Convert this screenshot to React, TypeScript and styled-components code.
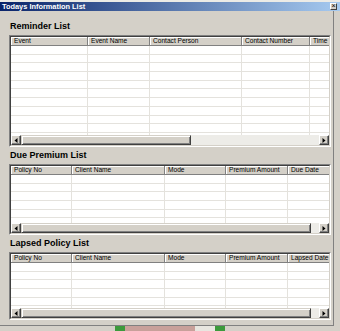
import React from 'react';
import styled, { createGlobalStyle } from 'styled-components';

type Column = {
    label: string
    width?: number
}

type ListPropsType = {
    columns: Column[]
    rowsHeight: number
    thumbWidth: number
}

const GlobalStyle = createGlobalStyle`
    html, body {
        margin: 0;
        padding: 0;
        background: #d4d0c8;
    }
    body {
        width: 340px;
        height: 331px;
        overflow: hidden;
        font-family: "Liberation Sans", Arial, sans-serif;
    }
`

// last column has no width: it takes what is left and gets clipped
const reminderColumns: Column[] = [
    { label: 'Event', width: 77 },
    { label: 'Event Name', width: 62 },
    { label: 'Contact Person', width: 92 },
    { label: 'Contact Number', width: 68 },
    { label: 'Time' },
]

const dueColumns: Column[] = [
    { label: 'Policy No', width: 61 },
    { label: 'Client Name', width: 93 },
    { label: 'Mode', width: 61 },
    { label: 'Premium Amount', width: 62 },
    { label: 'Due Date' },
]

const lapsedColumns: Column[] = [
    { label: 'Policy No', width: 61 },
    { label: 'Client Name', width: 93 },
    { label: 'Mode', width: 61 },
    { label: 'Premium Amount', width: 62 },
    { label: 'Lapsed Date' },
]

const Arrow = ({ dir }: { dir: 'left' | 'right' }) => (
    <svg width="4" height="5" viewBox="0 0 4 5">
        {dir === 'left'
            ? <polygon points="3.5,0 3.5,5 0.5,2.5" fill="#000" />
            : <polygon points="0.5,0 0.5,5 3.5,2.5" fill="#000" />}
    </svg>
)

const ListView = (props: ListPropsType) => {
    const rowCount = Math.ceil(props.rowsHeight / 8.7) + 1
    return (
        <ListOuter>
            <ListInner>
                <HeaderRow>
                    {props.columns.map((c, i) => (
                        <HeaderCell key={i} $w={c.width}>{c.label}</HeaderCell>
                    ))}
                </HeaderRow>
                <Rows $height={props.rowsHeight}>
                    {Array.from({ length: rowCount }).map((_, r) => (
                        <Row key={r}>
                            {props.columns.map((c, i) => (
                                <Cell key={i} $w={c.width} />
                            ))}
                        </Row>
                    ))}
                </Rows>
                <ScrollBar>
                    <ScrollButton><Arrow dir="left" /></ScrollButton>
                    <Track>
                        <Thumb $width={props.thumbWidth} />
                    </Track>
                    <ScrollButton><Arrow dir="right" /></ScrollButton>
                </ScrollBar>
            </ListInner>
        </ListOuter>
    )
}

export default function App() {
    return (
        <>
            <GlobalStyle />
            <Window>
                <TitleBar>
                    <TitleText>Todays Information List</TitleText>
                    <CloseButton>×</CloseButton>
                </TitleBar>
                <Frame>
                    <Body>
                        <Section>
                            <SectionTitle>Reminder List</SectionTitle>
                            <ListView columns={reminderColumns} rowsHeight={89} thumbWidth={170} />
                        </Section>
                        <Section>
                            <SectionTitle>Due Premium List</SectionTitle>
                            <ListView columns={dueColumns} rowsHeight={48} thumbWidth={290} />
                        </Section>
                        <Section>
                            <SectionTitle>Lapsed Policy List</SectionTitle>
                            <ListView columns={lapsedColumns} rowsHeight={45} thumbWidth={290} />
                        </Section>
                    </Body>
                </Frame>
                <Desk>
                    <DeskBlock $w={115} $c="#d4d0c8" />
                    <DeskBlock $w={10} $c="#3c9a3c" />
                    <DeskBlock $w={70} $c="#c8a09a" />
                    <DeskBlock $w={20} $c="#e8e6e0" />
                    <DeskBlock $w={10} $c="#3c9a3c" />
                    <DeskBlock $w={115} $c="#d4d0c8" />
                </Desk>
            </Window>
        </>
    )
}

const Window = styled.div`
    width: 340px;
    height: 331px;
    display: flex;
    flex-direction: column;
    border-top: 2px solid #ecebe6;
    box-sizing: border-box;
    background: #d4d0c8;
    overflow: hidden;
`

const TitleBar = styled.div`
    height: 9px;
    display: flex;
    align-items: center;
    justify-content: space-between;
    padding: 0 3px 0 2px;
    background: linear-gradient(to right, #0a246a, #a6caf0);
`

const TitleText = styled.span`
    color: #fff;
    font-weight: bold;
    font-size: 7.4px;
    line-height: 9px;
    white-space: nowrap;
`

const CloseButton = styled.div`
    width: 7px;
    height: 7px;
    box-sizing: border-box;
    background: #d4d0c8;
    border: 1px solid;
    border-color: #fff #404040 #404040 #fff;
    font-size: 7px;
    line-height: 4px;
    text-align: center;
    color: #000;
`

const Frame = styled.div`
    display: flex;
    padding-right: 6px;
`

const Body = styled.div`
    flex: 1;
    min-width: 0;
    display: flex;
    flex-direction: column;
    gap: 3px;
    padding: 10px 2px 5px 9px;
    border-right: 1px solid #808080;
    border-bottom: 1px solid #808080;
`

const Section = styled.section`
    display: flex;
    flex-direction: column;
    gap: 4px;
`

const SectionTitle = styled.h3`
    margin: 0;
    height: 10px;
    font-size: 9px;
    line-height: 10px;
    font-weight: bold;
    color: #000;
    padding-left: 1px;
`

const ListOuter = styled.div`
    border: 1px solid;
    border-color: #808080 #fff #fff #808080;
`

const ListInner = styled.div`
    border: 1px solid;
    border-color: #404040 #d4d0c8 #d4d0c8 #404040;
    background: #fff;
    overflow: hidden;
    display: flex;
    flex-direction: column;
`

const HeaderRow = styled.div`
    display: flex;
    height: 9px;
    background: #d4d0c8;
    border-bottom: 1px solid #808080;
    box-sizing: border-box;
`

const HeaderCell = styled.div<{ $w?: number }>`
    flex: ${p => (p.$w ? `0 0 ${p.$w}px` : '1 1 0')};
    min-width: 0;
    box-sizing: border-box;
    height: 100%;
    border-right: ${p => (p.$w ? '1px solid #808080' : 'none')};
    box-shadow: inset 1px 1px #fff;
    font-size: 6.6px;
    line-height: 8px;
    padding-left: 3px;
    white-space: nowrap;
    overflow: hidden;
    color: #000;
`

const Rows = styled.div<{ $height: number }>`
    height: ${p => p.$height}px;
    overflow: hidden;
    background: #fff;
`

const Row = styled.div`
    display: flex;
    height: 8.7px;
    box-sizing: border-box;
    border-bottom: 1px solid #e4e2dd;
`

const Cell = styled.div<{ $w?: number }>`
    flex: ${p => (p.$w ? `0 0 ${p.$w}px` : '1 1 0')};
    min-width: 0;
    height: 100%;
    box-sizing: border-box;
    border-right: ${p => (p.$w ? '1px solid #e4e2dd' : 'none')};
`

const ScrollBar = styled.div`
    display: flex;
    height: 10px;
    background: #edece8;
`

const ScrollButton = styled.div`
    flex: none;
    width: 10px;
    height: 10px;
    box-sizing: border-box;
    background: #d4d0c8;
    border: 1px solid;
    border-color: #fff #404040 #404040 #fff;
    box-shadow: inset -1px -1px #808080;
    display: flex;
    align-items: center;
    justify-content: center;
`

const Track = styled.div`
    flex: 1;
    min-width: 0;
    display: flex;
`

const Thumb = styled.div<{ $width: number }>`
    width: ${p => p.$width}px;
    height: 10px;
    box-sizing: border-box;
    background: #d4d0c8;
    border: 1px solid;
    border-color: #d4d0c8 #404040 #404040 #d4d0c8;
    box-shadow: inset 1px 1px #fff, inset -1px -1px #808080;
`

const Desk = styled.div`
    flex: 1;
    display: flex;
    background: #d4d0c8;
`

const DeskBlock = styled.div<{ $w: number, $c: string }>`
    width: ${p => p.$w}px;
    background: ${p => p.$c};
`
